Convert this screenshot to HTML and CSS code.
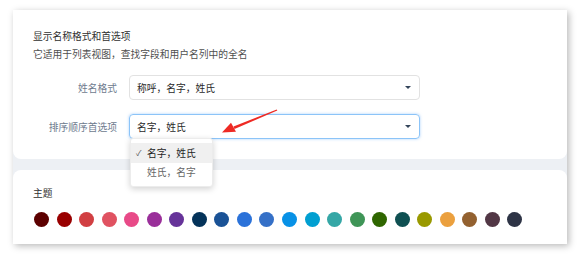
FILE: index.html
```html
<!DOCTYPE html>
<html lang="zh">
<head>
    <meta charset="UTF-8">
    <title>显示名称格式和首选项</title>
    <link rel="stylesheet" href="styles.css">
</head>
<body>
    <div class="frame">
        <div class="card first">
            <h2 class="title">显示名称格式和首选项</h2>
            <p class="sub">它适用于列表视图，查找字段和用户名列中的全名</p>
            <div class="form">
                <label class="label">姓名格式</label>
                <div class="select">
                    <span>称呼，名字，姓氏</span>
                    <i class="caret"></i>
                </div>
                <label class="label">排序顺序首选项</label>
                <div class="select focus">
                    <span>名字，姓氏</span>
                    <i class="caret"></i>
                    <ul class="menu">
                        <li class="item active"><span class="check">✓</span>名字，姓氏</li>
                        <li class="item">姓氏，名字</li>
                    </ul>
                </div>
            </div>
        </div>
        <div class="card second">
            <h2 class="title">主题</h2>
            <div class="swatches">
                <span class="dot" style="background:#5c0000"></span>
                <span class="dot" style="background:#990000"></span>
                <span class="dot" style="background:#d13f42"></span>
                <span class="dot" style="background:#e05261"></span>
                <span class="dot" style="background:#e84a88"></span>
                <span class="dot" style="background:#9a2f9a"></span>
                <span class="dot" style="background:#663399"></span>
                <span class="dot" style="background:#04335a"></span>
                <span class="dot" style="background:#1a5296"></span>
                <span class="dot" style="background:#2b72d9"></span>
                <span class="dot" style="background:#3570c7"></span>
                <span class="dot" style="background:#0891e6"></span>
                <span class="dot" style="background:#019fd1"></span>
                <span class="dot" style="background:#35a7a6"></span>
                <span class="dot" style="background:#3f9557"></span>
                <span class="dot" style="background:#2f6600"></span>
                <span class="dot" style="background:#0f5052"></span>
                <span class="dot" style="background:#999900"></span>
                <span class="dot" style="background:#eba03e"></span>
                <span class="dot" style="background:#936130"></span>
                <span class="dot" style="background:#523745"></span>
                <span class="dot" style="background:#2e3446"></span>
            </div>
        </div>
    </div>
    <svg class="arrow" width="580" height="254" viewBox="0 0 580 254">
        <polygon points="277.3,110.5 276.7,109.5 233.5,126.4 234.5,129.0" fill="#ee2a24"/>
        <polygon points="222,132.5 236,131.8 231,122.8" fill="#ee2a24"/>
    </svg>
</body>
</html>
```

FILE: styles.css
```css
*{
    margin: 0;
    padding: 0;
    box-sizing: border-box;
}
body{
    position: relative;
    width: 580px;
    height: 254px;
    background: #fff;
    font-family: "Noto Sans CJK SC", "Noto Sans", sans-serif;
    font-size: 9.75px;
    color: #333;
    overflow: hidden;
    padding: 10px 13px;
}
.frame{
    width: 554px;
    height: 234px;
    background: #edf0f4;
    box-shadow: 2px 2px 7px rgba(0, 0, 0, .28);
    display: flex;
    flex-direction: column;
    gap: 11px;
}
.card{
    background: #fff;
    padding: 0 20px;
}
.first{
    height: 149px;
    padding-top: 17px;
    border-radius: 0 0 8px 8px;
}
.second{
    flex: 1;
    padding-top: 14px;
    border-radius: 8px 8px 0 0;
}
.title{
    font-size: 9.75px;
    font-weight: normal;
    line-height: 18px;
    color: #2f2f2f;
}
.sub{
    line-height: 18px;
    color: #4f4f4f;
}
.form{
    margin-top: 12px;
    display: grid;
    grid-template-columns: 84px 291px;
    column-gap: 12px;
    row-gap: 14px;
    align-items: center;
}
.label{
    text-align: right;
    color: #6e7b8e;
}
.select{
    position: relative;
    height: 25px;
    border: 1px solid #e2e2e2;
    border-radius: 4px;
    display: flex;
    align-items: center;
    justify-content: space-between;
    padding: 0 8px 0 7px;
    color: #2a2a2a;
}
.select.focus{
    border-color: #8cc4f8;
    box-shadow: 0 0 3px rgba(100, 170, 250, .55);
}
.caret{
    width: 0;
    height: 0;
    border-left: 3px solid transparent;
    border-right: 3px solid transparent;
    border-top: 3.5px solid #34455a;
}
.menu{
    position: absolute;
    left: 0;
    top: 23px;
    width: 83px;
    list-style: none;
    background: #fff;
    border: 1px solid #ececec;
    border-radius: 3px;
    box-shadow: 0 2px 6px rgba(0, 0, 0, .18);
    padding: 4px 0;
    z-index: 2;
}
.item{
    height: 19.5px;
    display: flex;
    align-items: center;
    padding-left: 16px;
    color: #666;
}
.item.active{
    background: #f0f0f0;
    color: #1f1f1f;
    padding-left: 5px;
}
.check{
    width: 11px;
    font-size: 8px;
    color: #555;
}
.swatches{
    margin-top: 10px;
    margin-left: 1px;
    display: flex;
    gap: 7.55px;
}
.dot{
    width: 15px;
    height: 15px;
    border-radius: 50%;
}
.arrow{
    position: absolute;
    left: 0;
    top: 0;
    pointer-events: none;
    z-index: 3;
}
```
